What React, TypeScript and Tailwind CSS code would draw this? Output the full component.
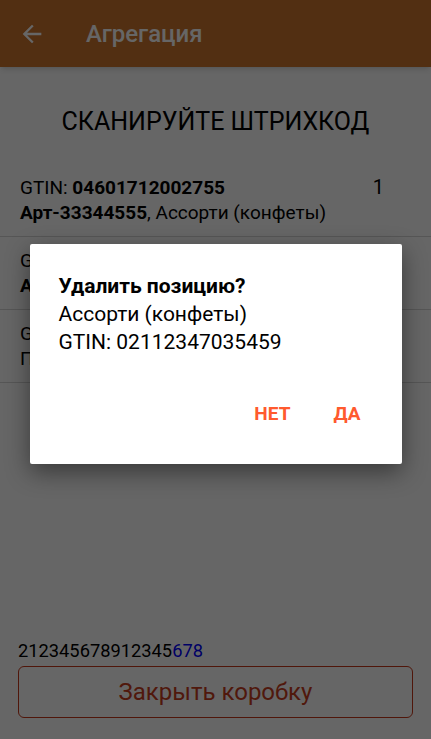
import React from "react";

const rows = [
  { gtin: "04601712002755", art: "Арт-33344555", name: "Ассорти (конфеты)", qty: "1" },
  { gtin: "02112347035459", art: "Арт-33344556", name: "Ассорти (конфеты)", qty: "1" },
  { gtin: "04607009200114", art: "", name: "Пряники медовые", qty: "1" },
];

const BackArrow = () => (
  <svg width="28" height="28" viewBox="0 0 24 24" fill="none">
    <path d="M20 11H7.83l5.59-5.59L12 4l-8 8 8 8 1.41-1.41L7.83 13H20v-2z" fill="#ffffff" />
  </svg>
);

export default function App() {
  return (
    <div className="relative w-[431px] h-[739px] overflow-hidden bg-white font-['Roboto',sans-serif] text-black">
      <div className="flex flex-col h-full">
        <div className="h-[67px] bg-[#cd752d] flex items-center shadow-md">
          <div className="w-[86px] pl-[18px] flex items-center">
            <BackArrow />
          </div>
          <span className="text-white text-[24px] font-medium">Агрегация</span>
        </div>

        <div className="h-[97px] pt-[40px] text-center text-[25px] leading-[30px]">
          СКАНИРУЙТЕ ШТРИХКОД
        </div>

        <div className="flex flex-col">
          {rows.map((r) => (
            <div
              key={r.gtin}
              className="flex justify-between pl-5 pr-[47px] py-[11px] border-b border-[#d8d8d8] text-[19px] leading-[25px]"
            >
              <div>
                <div>
                  GTIN: <b>{r.gtin}</b>
                </div>
                <div>
                  {r.art ? (
                    <>
                      <b>{r.art}</b>, {r.name}
                    </>
                  ) : (
                    r.name
                  )}
                </div>
              </div>
              <div className="text-[20px]">{r.qty}</div>
            </div>
          ))}
        </div>

        <div className="flex-1" />

        <div className="px-[18px] pb-[21px]">
          <div className="text-[18.3px] leading-[24px]">
            212345678912345<span className="text-[#0000ff]">678</span>
          </div>
          <button className="mt-[3px] w-full h-[52px] rounded-[6px] border border-[#c8391a] text-[#c93e1e] text-[24px]">
            Закрыть коробку
          </button>
        </div>
      </div>

      <div className="absolute inset-0 bg-black/60 flex flex-col items-center pt-[244px]">
        <div className="w-[372px] h-[220px] bg-white rounded-[2px] shadow-[0_8px_24px_rgba(0,0,0,0.45)] flex flex-col">
          <div className="px-[29px] pt-[28px] text-[21px] leading-[28px]">
            <div className="font-bold">Удалить позицию?</div>
            <div>Ассорти (конфеты)</div>
            <div>GTIN: 02112347035459</div>
          </div>
          <div className="flex justify-end items-center mt-[46px] pr-[41px] gap-[43px] text-[19px] leading-[24px] font-bold text-[#ff5a2e]">
            <span>НЕТ</span>
            <span>ДА</span>
          </div>
        </div>
      </div>
    </div>
  );
}
